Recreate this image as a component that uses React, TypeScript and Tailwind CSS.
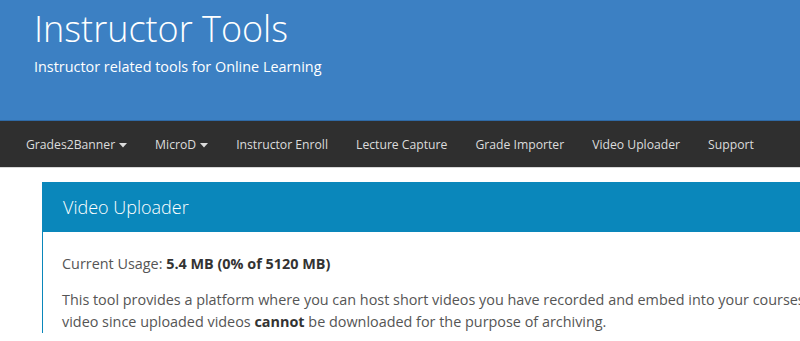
const navItems = [
  { label: 'Grades2Banner', caret: true },
  { label: 'MicroD', caret: true },
  { label: 'Instructor Enroll' },
  { label: 'Lecture Capture' },
  { label: 'Grade Importer' },
  { label: 'Video Uploader' },
  { label: 'Support' },
]

function Caret() {
  return (
    <svg width="8" height="5" viewBox="0 0 8 5" className="ml-[4px] inline-block">
      <path d="M0 0h8L4 4.5z" fill="currentColor" />
    </svg>
  )
}

export default function App() {
  return (
    <div className="min-h-screen bg-white font-['Open_Sans',sans-serif] text-[#555]">
      <header className="h-[121px] border-b border-[#2f6aa6] bg-[#3c80c3] px-[34px] pt-[5px]">
        <h1 className="text-[36px] font-light leading-[48px] text-white">Instructor Tools</h1>
        <p className="mt-[3px] text-[14.4px] font-normal text-white">Instructor related tools for Online Learning</p>
      </header>

      <nav className="flex h-[47px] items-center border-b border-[#d8d8d8] bg-[#2f2f2f] px-[12px] pt-[3px]">
        {navItems.map((item) => (
          <a key={item.label} className="flex shrink-0 items-center whitespace-nowrap px-[14px] text-[12.2px] text-[#dcdcdc]">
            {item.label}
            {item.caret && <Caret />}
          </a>
        ))}
      </nav>

      <div className="pl-[42px] pt-[14px]">
        <div className="border-l border-[#0a87bb]">
          <div className="flex h-[50px] items-center bg-[#0a87bb] px-[20px]">
            <h2 className="text-[18px] font-light text-white">Video Uploader</h2>
          </div>
          <div className="px-[19px] pt-[21px] text-[14.4px]">
            <p className="mb-[14px] leading-[22px]">
              Current Usage: <strong className="font-bold text-[#333]">5.4 MB (0% of 5120 MB)</strong>
            </p>
            <p className="whitespace-nowrap leading-[22px]">
              This tool provides a platform where you can host short videos you have recorded and embed into your courses.
              <br />
              video since uploaded videos <strong className="font-bold text-[#333]">cannot</strong> be downloaded for the purpose of archiving.
            </p>
          </div>
        </div>
      </div>
    </div>
  )
}
